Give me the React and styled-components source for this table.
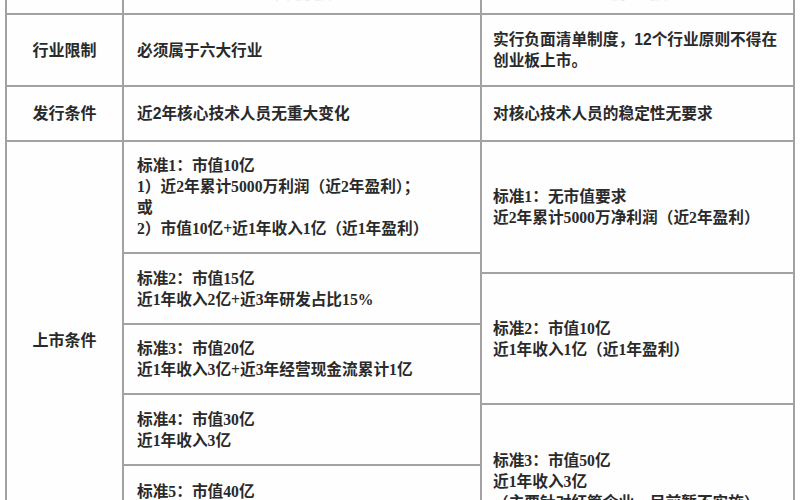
import React from "react";
import styled, { createGlobalStyle } from "styled-components";

const line = "#a2a2a2";

const Global = createGlobalStyle`
  body {
    margin: 0;
    background: #fff;
    overflow: hidden;
  }
`;

const Page = styled.div`
  margin-top: -41px;
  padding-left: 5px;
  font-family: "Liberation Sans", "Noto Sans CJK SC", sans-serif;
  color: #2a2a2a;
  font-weight: 700;
  font-size: 15.7px;
  line-height: 21px;
`;

const Table = styled.div`
  width: 790px;
  box-sizing: border-box;
  border-left: 2px solid ${line};
  border-right: 2px solid ${line};
  background: #fefefe;
`;

const Row = styled.div`
  display: grid;
  grid-template-columns: 115px 358px 1fr;
  box-sizing: border-box;
  height: ${(p) => (p.$h ? `${p.$h}px` : "auto")};
  border-bottom: ${(p) => (p.$open ? "none" : `2px solid ${line}`)};
`;

const Label = styled.div`
  display: flex;
  align-items: center;
  justify-content: center;
  font-size: 16px;
`;

const Cell = styled.div`
  box-sizing: border-box;
  border-left: 2px solid ${line};
  display: flex;
  align-items: center;
  padding: 0 10px 0 ${(p) => p.$pad || 13}px;
`;

const HeadCell = styled.div`
  box-sizing: border-box;
  border-left: ${(p) => (p.$first ? "none" : `2px solid ${line}`)};
  display: flex;
  align-items: flex-end;
  justify-content: center;
  padding-bottom: 11px;
  font-size: 20px;
  line-height: 20px;
  color: #dadada;
  font-weight: 400;
`;

const Stack = styled.div`
  display: flex;
  flex-direction: column;
  border-left: 2px solid ${line};
`;

const Sub = styled.div`
  box-sizing: border-box;
  height: ${(p) => p.$h}px;
  display: flex;
  align-items: ${(p) => (p.$top ? "flex-start" : "center")};
  padding: ${(p) => (p.$top ? `${p.$top}px` : "0")} 8px 0 ${(p) => p.$pad}px;
  border-bottom: ${(p) => (p.$last ? "none" : `2px solid ${line}`)};
  font-family: "Liberation Serif", "Noto Sans CJK SC", serif;
`;

const Text = styled.div`
  white-space: pre-line;
`;

const middle = [
  {
    h: 112,
    text: "标准1：市值10亿\n1）近2年累计5000万利润（近2年盈利）；\n或\n2）市值10亿+近1年收入1亿（近1年盈利）",
  },
  { h: 71, text: "标准2：市值15亿\n近1年收入2亿+近3年研发占比15%" },
  { h: 70, text: "标准3：市值20亿\n近1年收入3亿+近3年经营现金流累计1亿" },
  { h: 71, text: "标准4：市值30亿\n近1年收入3亿" },
  { h: 71, text: "标准5：市值40亿\n主要业务或产品需经国家有关部门批准" },
];

const right = [
  { h: 132, text: "标准1：无市值要求\n近2年累计5000万净利润（近2年盈利）" },
  { h: 131, text: "标准2：市值10亿\n近1年收入1亿（近1年盈利）" },
  {
    h: 133,
    top: 45,
    text: "标准3：市值50亿\n近1年收入3亿\n（主要针对红筹企业，目前暂不实施）",
  },
];

export default function App() {
  return (
    <Page>
      <Global />
      <Table>
        <Row $h={56}>
          <HeadCell $first />
          <HeadCell>科创板</HeadCell>
          <HeadCell>创业板</HeadCell>
        </Row>
        <Row $h={72}>
          <Label>行业限制</Label>
          <Cell>必须属于六大行业</Cell>
          <Cell $pad={11}>
            <Text>
              实行负面清单制度，12个行业原则不得在{"\n"}创业板上市。
            </Text>
          </Cell>
        </Row>
        <Row $h={55}>
          <Label>发行条件</Label>
          <Cell>近2年核心技术人员无重大变化</Cell>
          <Cell $pad={11}>对核心技术人员的稳定性无要求</Cell>
        </Row>
        <Row $open>
          <Label>上市条件</Label>
          <Stack>
            {middle.map((m, i) => (
              <Sub key={i} $h={m.h} $pad={13} $last={i === middle.length - 1}>
                <Text>{m.text}</Text>
              </Sub>
            ))}
          </Stack>
          <Stack>
            {right.map((r, i) => (
              <Sub
                key={i}
                $h={r.h}
                $pad={11}
                $top={r.top}
                $last={i === right.length - 1}
              >
                <Text>{r.text}</Text>
              </Sub>
            ))}
          </Stack>
        </Row>
      </Table>
    </Page>
  );
}
